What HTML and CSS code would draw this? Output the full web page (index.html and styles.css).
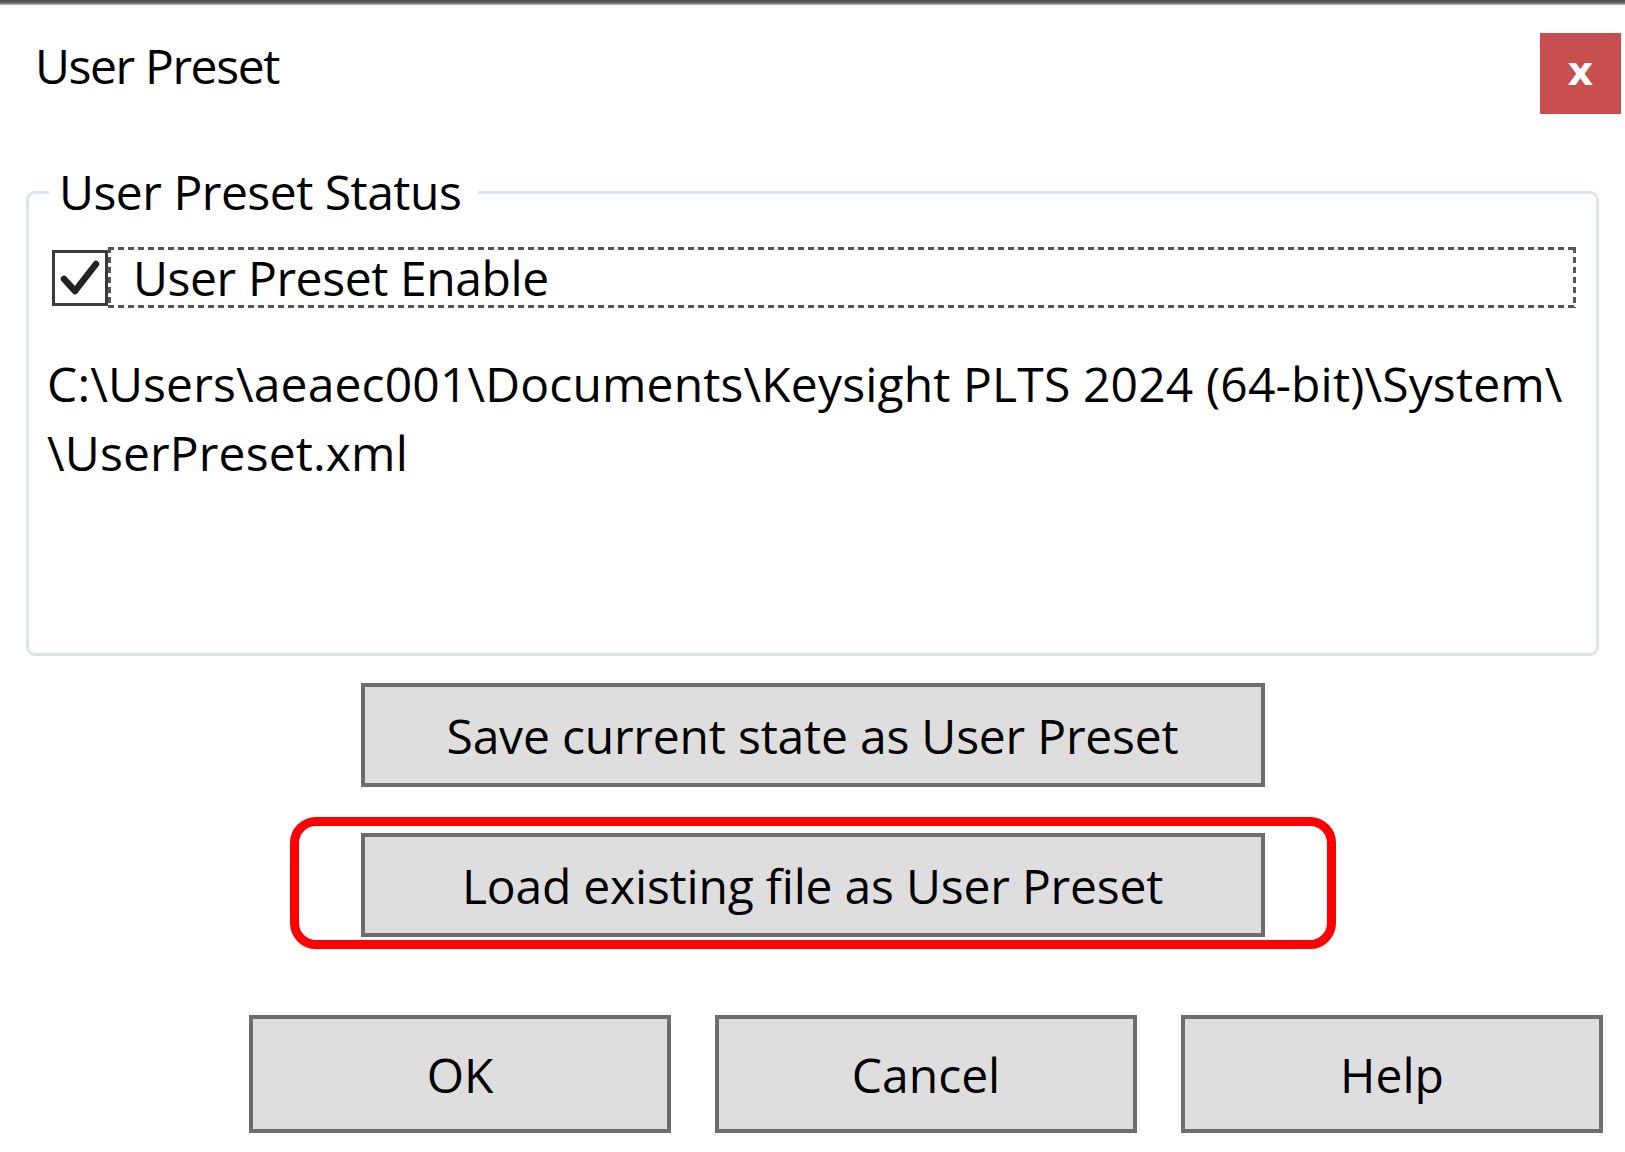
FILE: index.html
```html
<!DOCTYPE html>
<html lang="en">
<head>
<meta charset="utf-8">
<title>User Preset</title>
<link rel="stylesheet" href="styles.css">
</head>
<body>
<div class="window">
  <div class="topline"></div>
  <div class="titlebar">
    <div class="title">User Preset</div>
    <div class="close">x</div>
  </div>
  <fieldset class="group">
    <legend class="group-legend">User Preset Status</legend>
    <div class="check-row">
      <span class="checkbox">
        <svg viewBox="0 0 48 48" width="48" height="48"><path d="M8 25 L19 37 L40 10" fill="none" stroke="#222" stroke-width="6.5" stroke-linecap="round" stroke-linejoin="round"/></svg>
      </span>
      <span class="check-label">User Preset Enable</span>
    </div>
    <p class="path">C:\Users\aeaec001\Documents\Keysight PLTS 2024 (64-bit)\System\<br>\UserPreset.xml</p>
  </fieldset>
  <div class="actions">
    <button class="btn btn-wide">Save current state as User Preset</button>
    <div class="highlight">
      <button class="btn btn-wide">Load existing file as User Preset</button>
    </div>
  </div>
  <div class="footer">
    <button class="btn btn-footer">OK</button>
    <button class="btn btn-footer">Cancel</button>
    <button class="btn btn-footer">Help</button>
  </div>
</div>
</body>
</html>
```
FILE: styles.css
```css
html, body {
  margin: 0;
  padding: 0;
  background: #ffffff;
}
body {
  font-family: "Open Sans", "Noto Sans", sans-serif;
  font-size: 48px;
  letter-spacing: -0.3px;
  color: #000;
}
.window {
  width: 1625px;
  height: 1152px;
  overflow: hidden;
  display: flex;
  flex-direction: column;
}
.topline {
  height: 5px;
  background: linear-gradient(#4a4a4a, #6a6a6a 60%, #c8c8c8);
}
.titlebar {
  display: flex;
  justify-content: space-between;
  align-items: flex-start;
  padding: 28px 4px 0 35px;
  height: 81px;
}
.title {
  line-height: 48px;
  margin-top: 9px;
  letter-spacing: -1.4px;
}
.close {
  width: 81px;
  height: 81px;
  background: #c84f4f;
  color: #fff;
  font-family: "DejaVu Sans", sans-serif;
  font-weight: bold;
  font-size: 40px;
  letter-spacing: 0;
  line-height: 76px;
  text-align: center;
}
.group {
  margin: 50px 26px 0 26px;
  border: 3px solid #dce5ed;
  border-radius: 9px;
  padding: 0 16px 0 18px;
  height: 486px;
  box-sizing: content-box;
}
.group-legend {
  padding: 0 17px 0 10px;
  margin-left: 2px;
  line-height: 56px;
  letter-spacing: -0.5px;
}
.check-row {
  display: flex;
  align-items: center;
  margin-top: 27px;
  margin-left: 5px;
}
.checkbox {
  width: 50px;
  height: 50px;
  border: 3px solid #3a3a3a;
  display: flex;
  align-items: center;
  justify-content: center;
  flex: none;
}
.check-label {
  flex: 1;
  height: 61px;
  line-height: 61px;
  padding-left: 25px;
  margin-right: 4px;
  letter-spacing: -0.4px;
  background-image:
    repeating-linear-gradient(90deg, #555 0 6px, transparent 6px 10px),
    repeating-linear-gradient(90deg, #555 0 6px, transparent 6px 10px),
    repeating-linear-gradient(180deg, #555 0 6px, transparent 6px 10px),
    repeating-linear-gradient(180deg, #555 0 6px, transparent 6px 10px);
  background-size: 100% 3px, 100% 3px, 3px 100%, 3px 100%;
  background-position: 0 0, 0 100%, 0 0, 100% 0;
  background-repeat: no-repeat;
}
.path {
  margin: 41px 0 0 0;
  line-height: 69px;
  letter-spacing: 0.15px;
}
.path-tail {
  letter-spacing: -0.6px;
}
.actions {
  display: flex;
  flex-direction: column;
  align-items: center;
  margin-top: 27px;
}
.btn {
  font-family: inherit;
  font-size: 48px;
  letter-spacing: -0.2px;
  color: #000;
  background: #dedede;
  border: 4px solid #6d6d6d;
  border-radius: 0;
  padding: 0;
  margin: 0;
}
.btn-wide {
  width: 904px;
  height: 104px;
}
.highlight {
  margin-top: 30px;
  border: 9px solid #ff0000;
  border-radius: 26px;
  padding: 7px 62px 3px 62px;
  display: flex;
}
.footer {
  display: flex;
  justify-content: flex-end;
  gap: 44px;
  padding-right: 22px;
  margin-top: 66px;
}
.btn-footer {
  width: 422px;
  height: 118px;
  letter-spacing: 0;
}
```
